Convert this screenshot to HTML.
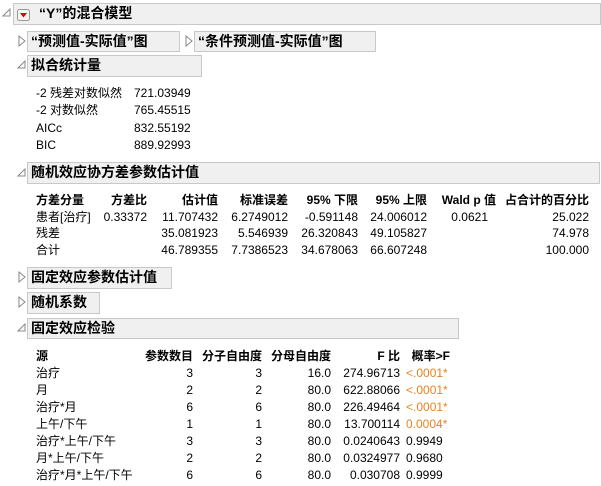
<!DOCTYPE html>
<html><head><meta charset="utf-8"><style>
body{margin:0;width:601px;height:486px;background:#fff;position:relative;overflow:hidden;font-family:"Liberation Sans","Noto Sans CJK SC",sans-serif;font-size:12px;color:#000}
.a{position:absolute;white-space:nowrap;line-height:16px}
.bx{position:absolute;background:#f0f0f0;border:1px solid #c8c8c8;box-sizing:border-box;font-weight:bold;font-size:14px;line-height:19px;padding-left:3px;white-space:nowrap}
.r{text-align:right}
.b{font-weight:bold}
.o{color:#e8821e}
svg{position:absolute}
</style></head><body>
<svg style="left:2px;top:8px" width="10" height="10"><path d="M8 1 L8 8 L1 8 Z" fill="none" stroke="#888"/></svg>
<div class="bx" style="left:13px;top:3px;width:588px;height:22px;padding-left:25px">“Y”的混合模型</div>
<svg style="left:17px;top:9px" width="14" height="13"><rect x="0.5" y="0.5" width="12" height="11" rx="2" fill="#f4f4f4" stroke="#999"/><path d="M3 4 L10 4 L6.5 8.5Z" fill="#d00"/></svg>

<svg style="left:18px;top:35px" width="9" height="12"><path d="M1 1 L7 6 L1 11Z" fill="none" stroke="#888"/></svg>
<div class="bx" style="left:27px;top:31px;width:153px;height:21px">“预测值-实际值”图</div>
<svg style="left:185px;top:35px" width="9" height="12"><path d="M1 1 L7 6 L1 11Z" fill="none" stroke="#888"/></svg>
<div class="bx" style="left:194px;top:31px;width:182px;height:21px">“条件预测值-实际值”图</div>

<svg style="left:17px;top:60px" width="10" height="10"><path d="M8 1 L8 8 L1 8 Z" fill="none" stroke="#888"/></svg>
<div class="bx" style="left:27px;top:55px;width:175px;height:22px">拟合统计量</div>
<div class="a" style="left:36px;top:85px">-2 残差对数似然</div><div class="a" style="left:134px;top:85px">721.03949</div>
<div class="a" style="left:36px;top:102px">-2 对数似然</div><div class="a" style="left:134px;top:102px">765.45515</div>
<div class="a" style="left:36px;top:120px">AICc</div><div class="a" style="left:134px;top:120px">832.55192</div>
<div class="a" style="left:36px;top:137px">BIC</div><div class="a" style="left:134px;top:137px">889.92993</div>

<svg style="left:17px;top:168px" width="10" height="10"><path d="M8 1 L8 8 L1 8 Z" fill="none" stroke="#888"/></svg>
<div class="bx" style="left:27px;top:162px;width:573px;height:22px">随机效应协方差参数估计值</div>
<div class="a b" style="left:36px;top:192px">方差分量</div>
<div class="a b r" style="right:454px;top:192px">方差比</div>
<div class="a b r" style="right:383px;top:192px">估计值</div>
<div class="a b r" style="right:313px;top:192px">标准误差</div>
<div class="a b r" style="right:243px;top:192px">95% 下限</div>
<div class="a b r" style="right:174px;top:192px">95% 上限</div>
<div class="a b r" style="right:105px;top:192px">Wald p 值</div>
<div class="a b r" style="right:12px;top:192px">占合计的百分比</div>
<div class="a" style="left:36px;top:209px">患者[治疗]</div>
<div class="a r" style="right:454px;top:209px">0.33372</div>
<div class="a r" style="right:383px;top:209px">11.707432</div>
<div class="a r" style="right:313px;top:209px">6.2749012</div>
<div class="a r" style="right:243px;top:209px">-0.591148</div>
<div class="a r" style="right:174px;top:209px">24.006012</div>
<div class="a r" style="right:113px;top:209px">0.0621</div>
<div class="a r" style="right:12px;top:209px">25.022</div>
<div class="a" style="left:36px;top:225px">残差</div>
<div class="a r" style="right:383px;top:225px">35.081923</div>
<div class="a r" style="right:313px;top:225px">5.546939</div>
<div class="a r" style="right:243px;top:225px">26.320843</div>
<div class="a r" style="right:174px;top:225px">49.105827</div>
<div class="a r" style="right:12px;top:225px">74.978</div>
<div class="a" style="left:36px;top:242px">合计</div>
<div class="a r" style="right:383px;top:242px">46.789355</div>
<div class="a r" style="right:313px;top:242px">7.7386523</div>
<div class="a r" style="right:243px;top:242px">34.678063</div>
<div class="a r" style="right:174px;top:242px">66.607248</div>
<div class="a r" style="right:12px;top:242px">100.000</div>

<svg style="left:18px;top:271px" width="9" height="12"><path d="M1 1 L7 6 L1 11Z" fill="none" stroke="#888"/></svg>
<div class="bx" style="left:27px;top:267px;width:145px;height:22px">固定效应参数估计值</div>
<svg style="left:18px;top:296px" width="9" height="12"><path d="M1 1 L7 6 L1 11Z" fill="none" stroke="#888"/></svg>
<div class="bx" style="left:27px;top:292px;width:73px;height:22px">随机系数</div>

<svg style="left:17px;top:323px" width="10" height="10"><path d="M8 1 L8 8 L1 8 Z" fill="none" stroke="#888"/></svg>
<div class="bx" style="left:27px;top:318px;width:432px;height:21px">固定效应检验</div>
<div class="a b" style="left:36px;top:348px">源</div>
<div class="a b r" style="right:408px;top:348px">参数数目</div>
<div class="a b r" style="right:339px;top:348px">分子自由度</div>
<div class="a b r" style="right:270px;top:348px">分母自由度</div>
<div class="a b r" style="right:201px;top:348px">F 比</div>
<div class="a b r" style="right:151px;top:348px">概率&gt;F</div>

<div class="a" style="left:36px;top:365px">治疗</div><div class="a r" style="right:408px;top:365px">3</div><div class="a r" style="right:339px;top:365px">3</div><div class="a r" style="right:270px;top:365px">16.0</div><div class="a r" style="right:201px;top:365px">274.96713</div><div class="a o" style="left:406px;top:365px">&lt;.0001*</div>
<div class="a" style="left:36px;top:382px">月</div><div class="a r" style="right:408px;top:382px">2</div><div class="a r" style="right:339px;top:382px">2</div><div class="a r" style="right:270px;top:382px">80.0</div><div class="a r" style="right:201px;top:382px">622.88066</div><div class="a o" style="left:406px;top:382px">&lt;.0001*</div>
<div class="a" style="left:36px;top:399px">治疗*月</div><div class="a r" style="right:408px;top:399px">6</div><div class="a r" style="right:339px;top:399px">6</div><div class="a r" style="right:270px;top:399px">80.0</div><div class="a r" style="right:201px;top:399px">226.49464</div><div class="a o" style="left:406px;top:399px">&lt;.0001*</div>
<div class="a" style="left:36px;top:416px">上午/下午</div><div class="a r" style="right:408px;top:416px">1</div><div class="a r" style="right:339px;top:416px">1</div><div class="a r" style="right:270px;top:416px">80.0</div><div class="a r" style="right:201px;top:416px">13.700114</div><div class="a o" style="left:406px;top:416px">0.0004*</div>
<div class="a" style="left:36px;top:433px">治疗*上午/下午</div><div class="a r" style="right:408px;top:433px">3</div><div class="a r" style="right:339px;top:433px">3</div><div class="a r" style="right:270px;top:433px">80.0</div><div class="a r" style="right:201px;top:433px">0.0240643</div><div class="a" style="left:406px;top:433px">0.9949</div>
<div class="a" style="left:36px;top:450px">月*上午/下午</div><div class="a r" style="right:408px;top:450px">2</div><div class="a r" style="right:339px;top:450px">2</div><div class="a r" style="right:270px;top:450px">80.0</div><div class="a r" style="right:201px;top:450px">0.0324977</div><div class="a" style="left:406px;top:450px">0.9680</div>
<div class="a" style="left:36px;top:467px">治疗*月*上午/下午</div><div class="a r" style="right:408px;top:467px">6</div><div class="a r" style="right:339px;top:467px">6</div><div class="a r" style="right:270px;top:467px">80.0</div><div class="a r" style="right:201px;top:467px">0.030708</div><div class="a" style="left:406px;top:467px">0.9999</div>
</body></html>
